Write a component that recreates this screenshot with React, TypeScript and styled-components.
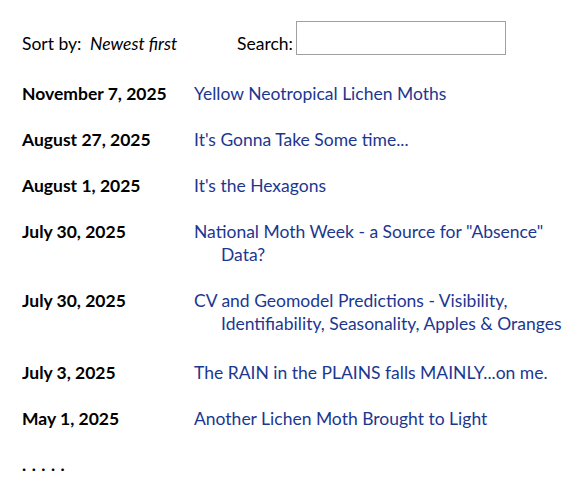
import React from 'react';
import styled, { createGlobalStyle } from 'styled-components';

const Global = createGlobalStyle`
  body {
    margin: 0;
    background: #fff;
    font-family: Lato, "Open Sans", sans-serif;
    color: #000;
  }
`;

const Page = styled.div`
  padding: 21px 22px 0 22px;
  width: 587px;
  box-sizing: border-box;
`;

const Toolbar = styled.div`
  display: flex;
  align-items: flex-end;
  font-size: 17.5px;
  line-height: 23px;
  height: 34px;
  margin-bottom: 27px;
`;

const SortLabel = styled.span`
  width: 68px;
`;

const SortValue = styled.em`
  width: 147px;
`;

const SearchLabel = styled.span`
  width: 59px;
`;

const SearchInput = styled.input`
  width: 210px;
  height: 34px;
  box-sizing: border-box;
  border: 1px solid #a0a0a0;
  padding: 2px 4px;
  font: inherit;
  outline: none;
  align-self: flex-start;
`;

const List = styled.ul`
  list-style: none;
  margin: 0;
  padding: 0;
`;

const Row = styled.li<{ $extra?: number }>`
  display: grid;
  grid-template-columns: 172px 1fr;
  font-size: 17.5px;
  line-height: 23px;
  margin-bottom: ${(p) => 23 + (p.$extra ?? 0)}px;
`;

const Date = styled.span`
  font-weight: 700;
`;

const Title = styled.a`
  color: #1c3790;
  text-decoration: none;
  padding-left: 27px;
  text-indent: -27px;
  display: block;
`;

const More = styled.div`
  font-weight: 700;
  font-size: 17.5px;
  line-height: 23px;
  letter-spacing: 5.5px;
  margin-top: 5px;
`;

const posts = [
  { date: 'November 7, 2025', title: 'Yellow Neotropical Lichen Moths' },
  { date: 'August 27, 2025', title: "It's Gonna Take Some time..." },
  { date: 'August 1, 2025', title: "It's the Hexagons" },
  { date: 'July 30, 2025', title: 'National Moth Week - a Source for "Absence" Data?' },
  { date: 'July 30, 2025', title: 'CV and Geomodel Predictions - Visibility, Identifiability, Seasonality, Apples & Oranges', extra: 3 },
  { date: 'July 3, 2025', title: 'The RAIN in the PLAINS falls MAINLY...on me.' },
  { date: 'May 1, 2025', title: 'Another Lichen Moth Brought to Light' },
];

export default function App() {
  return (
    <>
      <Global />
      <Page>
        <Toolbar>
          <SortLabel>Sort by:</SortLabel>
          <SortValue>Newest first</SortValue>
          <SearchLabel>Search:</SearchLabel>
          <SearchInput type="text" />
        </Toolbar>
        <List>
          {posts.map((p, i) => (
            <Row key={i} $extra={p.extra}>
              <Date>{p.date}</Date>
              <Title href="#">{p.title}</Title>
            </Row>
          ))}
        </List>
        <More>.....</More>
      </Page>
    </>
  );
}
